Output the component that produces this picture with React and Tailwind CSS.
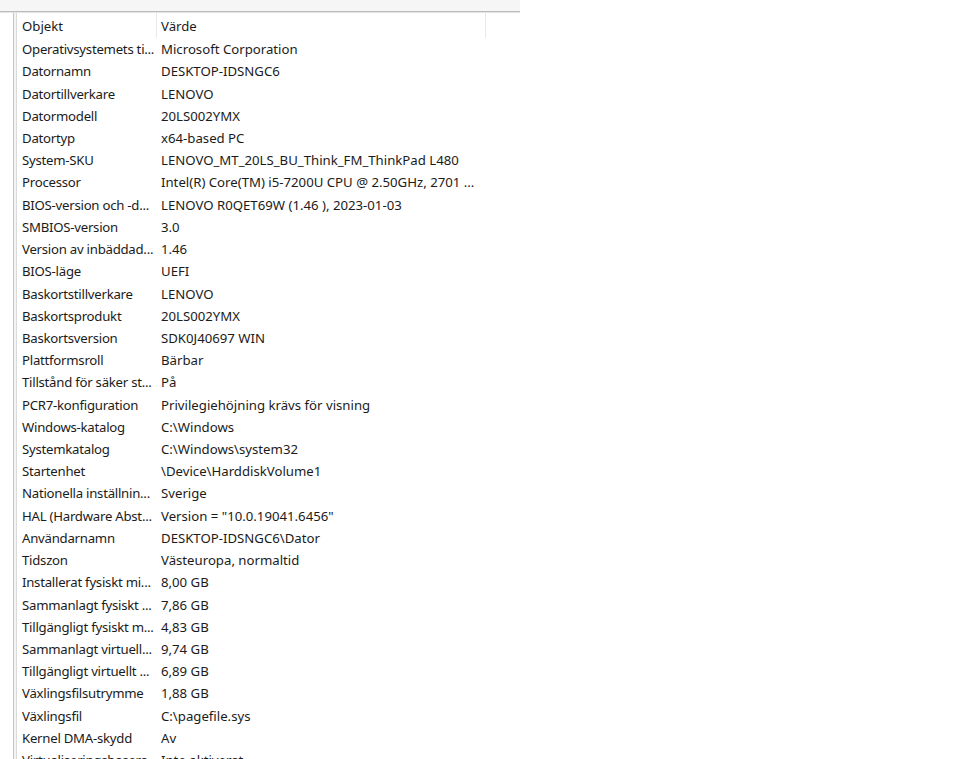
import React from "react";

const rows = [
  ["Operativsystemets ti...", "Microsoft Corporation"],
  ["Datornamn", "DESKTOP-IDSNGC6"],
  ["Datortillverkare", "LENOVO"],
  ["Datormodell", "20LS002YMX"],
  ["Datortyp", "x64-based PC"],
  ["System-SKU", "LENOVO_MT_20LS_BU_Think_FM_ThinkPad L480"],
  ["Processor", "Intel(R) Core(TM) i5-7200U CPU @ 2.50GHz, 2701 ..."],
  ["BIOS-version och -d...", "LENOVO R0QET69W (1.46 ), 2023-01-03"],
  ["SMBIOS-version", "3.0"],
  ["Version av inbäddad...", "1.46"],
  ["BIOS-läge", "UEFI"],
  ["Baskortstillverkare", "LENOVO"],
  ["Baskortsprodukt", "20LS002YMX"],
  ["Baskortsversion", "SDK0J40697 WIN"],
  ["Plattformsroll", "Bärbar"],
  ["Tillstånd för säker st...", "På"],
  ["PCR7-konfiguration", "Privilegiehöjning krävs för visning"],
  ["Windows-katalog", "C:\\Windows"],
  ["Systemkatalog", "C:\\Windows\\system32"],
  ["Startenhet", "\\Device\\HarddiskVolume1"],
  ["Nationella inställnin...", "Sverige"],
  ["HAL (Hardware Abst...", 'Version = "10.0.19041.6456"'],
  ["Användarnamn", "DESKTOP-IDSNGC6\\Dator"],
  ["Tidszon", "Västeuropa, normaltid"],
  ["Installerat fysiskt mi...", "8,00 GB"],
  ["Sammanlagt fysiskt ...", "7,86 GB"],
  ["Tillgängligt fysiskt m...", "4,83 GB"],
  ["Sammanlagt virtuell...", "9,74 GB"],
  ["Tillgängligt virtuellt ...", "6,89 GB"],
  ["Växlingsfilsutrymme", "1,88 GB"],
  ["Växlingsfil", "C:\\pagefile.sys"],
  ["Kernel DMA-skydd", "Av"],
  ["Virtualiseringsbasera...", "Inte aktiverat"],
];

export default function App() {
  return (
    <div
      className="w-[960px] h-[759px] overflow-hidden bg-white text-[#1b1b1b] text-[13.2px] leading-[18px]"
      style={{ fontFamily: '"Noto Sans", "Open Sans", sans-serif' }}
    >
      <div className="w-[520px] h-[11px] bg-[#f6f6f6]" />
      <div className="w-[520px] h-px bg-[#bcbcbc]" />
      <div className="w-[520px] h-px bg-[#e4e4e4]" />
      <div className="flex">
        <div className="w-[13px] shrink-0" />
        <div className="w-px shrink-0 h-[760px] bg-[#c4c4c4]" />
        <div className="w-[2px] shrink-0 bg-[#f4f4f4]" />
        <div className="w-px shrink-0 h-[760px] bg-[#dadada]" />
        <div className="flex flex-col w-[470px]">
          <div className="flex h-[25px]">
            <div className="w-[140px] h-full flex items-center pt-[1px] pl-[5px] border-r border-[#e8e8e8]">
              Objekt
            </div>
            <div className="w-[329px] h-full flex items-center pt-[1px] pl-[4px] border-r border-[#e8e8e8]">
              Värde
            </div>
          </div>
          {rows.map(([k, v], i) => (
            <div key={i} className="flex h-[22.23px] items-center whitespace-nowrap">
              <div className="w-[140px] shrink-0 pl-[5px] tracking-[-0.25px]">{k}</div>
              <div className="pl-[4px]">{v}</div>
            </div>
          ))}
        </div>
      </div>
    </div>
  );
}
